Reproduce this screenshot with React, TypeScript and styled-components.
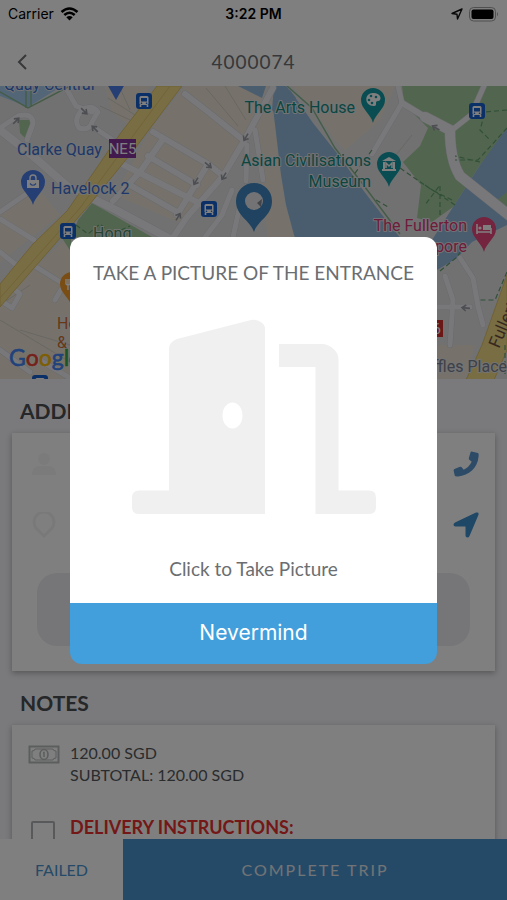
import React from "react";
import styled, { createGlobalStyle } from "styled-components";

const GlobalStyle = createGlobalStyle`
  *, *::before, *::after { box-sizing: border-box; }
  body { margin: 0; background: #f4f4f8; font-family: Lato, "Open Sans", sans-serif; color: #55595c; }
  button { font: inherit; color: inherit; border: 0; padding: 0; background: none; cursor: pointer; }
  h1, h2, p { margin: 0; font-weight: 400; }
`;

const Screen = styled.div`
  height: 100vh;
  display: flex;
  flex-direction: column;
  overflow: hidden;
`;

const StatusBar = styled.div`
  flex: none;
  height: 28px;
  padding: 0 8px;
  display: grid;
  grid-template-columns: 1fr auto 1fr;
  align-items: center;
  background: #fff;
  color: #000;
  font: 400 14px/20px Inter, sans-serif;
`;

const StatusGroup = styled.div<{ $end?: boolean }>`
  display: flex;
  align-items: center;
  gap: 6px;
  justify-content: ${(p) => (p.$end ? "flex-end" : "flex-start")};
`;

const Clock = styled.time`
  font-weight: 600;
`;

const Header = styled.header`
  flex: none;
  height: 58px;
  padding: 10px 12px 0;
  display: grid;
  grid-template-columns: 1fr auto 1fr;
  align-items: center;
  background: #fff;
`;

const BackButton = styled.button`
  width: 20px;
  height: 32px;
  display: grid;
  place-items: center;
`;

const OrderNumber = styled.h1`
  font-size: 19px;
  line-height: 24px;
  letter-spacing: 1px;
  color: #6d7073;
`;

const Content = styled.main`
  flex: 1;
  min-height: 0;
  overflow: auto;
  scrollbar-width: none;
`;

const MapView = styled.svg`
  display: block;
  width: 100%;
  height: 293px;
  font-family: Roboto, sans-serif;
`;

const SectionTitle = styled.h2`
  padding: 20px 20px 10px;
  font-size: 21px;
  line-height: 24px;
  font-weight: 700;
  color: #4a4e52;
`;

const Card = styled.section`
  margin: 0 12px;
  padding: 0 25px 25px;
  background: #fff;
  box-shadow: 0 2px 6px rgba(0, 0, 0, 0.3);
`;

const ContactRow = styled.div`
  height: 61px;
  margin: 0 -10px 0 -6px;
  display: flex;
  align-items: center;
  justify-content: space-between;
`;

const IconButton = styled.button`
  width: 28px;
  height: 28px;
  display: grid;
  place-items: center;
`;

const Placeholder = styled.div`
  height: 73px;
  margin-top: 18px;
  border-radius: 20px;
  background: #ededf1;
`;

const NoteList = styled.section`
  margin: 0 12px;
  padding: 17px 16px;
  background: #fff;
  box-shadow: 0 2px 6px rgba(0, 0, 0, 0.3);
  display: grid;
  row-gap: 30px;
`;

const Note = styled.div`
  display: grid;
  grid-template-columns: 32px 1fr;
  column-gap: 10px;
  font-size: 16px;
  line-height: 22px;
`;

const Warning = styled.strong`
  font-size: 18px;
  font-weight: 700;
  color: #e8302f;
`;

const Footer = styled.footer`
  flex: none;
  height: 61px;
  display: flex;
  background: #fff;
`;

const FailButton = styled.button`
  width: 123px;
  font-size: 16px;
  color: #4a94d0;
`;

const CompleteButton = styled.button`
  flex: 1;
  background: #4a94d0;
  color: #e4e8ec;
  font-size: 16px;
  letter-spacing: 2px;
`;

const Backdrop = styled.div`
  position: fixed;
  inset: 0;
  padding: 0 70px;
  display: flex;
  align-items: center;
  justify-content: center;
  background: rgba(0, 0, 0, 0.5);
`;

const Dialog = styled.div`
  width: 100%;
  max-width: 480px;
  text-align: center;
  color: #6b6e71;
`;

const DialogTitle = styled.h2`
  padding: 24px 0 34px;
  border-radius: 12px 12px 0 0;
  background: #fff;
  font-size: 19px;
  line-height: 24px;
  white-space: nowrap;
`;

const CaptureButton = styled.button`
  && { background: #fff; }
  width: 100%;
  padding-bottom: 22px;
  display: flex;
  flex-direction: column;
  align-items: center;
  gap: 42px;
  font-size: 19px;
  line-height: 24px;
`;

const DismissButton = styled.button`
  display: block;
  width: 100%;
  height: 61px;
  border-radius: 0 0 12px 12px;
  background: #429fdb;
  color: #fff;
  font: 400 21px/28px Inter, sans-serif;
`;

type Point = { x: number; y: number };

const BusStop = ({ x, y }: Point) => (
  <g transform={`translate(${x} ${y})`}>
    <rect x="-8" y="-8" width="16" height="16" rx="3" fill="#1660d0" />
    <rect x="-4.500" y="-5" width="9" height="9" rx="1.500" fill="#fff" />
    <rect x="-3" y="-3" width="6" height="3.500" fill="#1660d0" />
    <path d="M-3.500 4v2M3.500 4v2" stroke="#fff" strokeWidth="1.600" />
    <circle cx="-2.500" cy="2.300" r=".8" fill="#1660d0" />
    <circle cx="2.500" cy="2.300" r=".8" fill="#1660d0" />
  </g>
);

const Pin = ({ x, y, fill, children }: Point & { fill: string; children?: React.ReactNode }) => (
  <g transform={`translate(${x} ${y})`}>
    <path d="M0 23C-2 14-12 9-12 0a12 12 0 0 1 24 0C12 9 2 14 0 23Z" fill={fill} />
    {children}
  </g>
);

const Arrow = ({ x, y, turn }: Point & { turn: number }) => (
  <path
    transform={`translate(${x} ${y}) rotate(${turn})`}
    d="M-4 0H4M0-3 4 0 0 3"
    fill="none"
    stroke="#9a9ca4"
    strokeWidth="1.600"
  />
);

const CityMap = () => (
  <MapView viewBox="0 86 507 293" preserveAspectRatio="xMidYMid slice" role="img" aria-label="Map of the delivery area">
    <rect y="86" width="507" height="294" fill="#e3e3e5" />
    <g fill="#ece5d6">
      <path d="M185 86H268L245 135 225 170 185 225 115 195 150 130Z" />
      <path d="M255 115 272 100 281 160 284 200 296 240H268L262 190Z" />
      <path d="M292 86H395L380 120 345 150 335 140 312 108Z" />
      <path d="M0 300 70 235V380H0Z" />
      <path d="M0 215 38 188 60 215 0 262Z" />
      <path d="M437 345 475 345 465 380H437Z" />
      <path d="M105 86H150L128 125 112 112Z" />
    </g>
    <path d="M116 198 180 232 140 222Z" fill="#e3e3e5" />
    <path d="M0 86H62L28 107 0 96Z" fill="#a5cdf0" />
    <path d="M273 108 290 90 313 123 340 157 363 190 386 220 410 250H300L294 235 286 205 281 175Z" fill="#93bade" />
    <path d="M238 86H266L262 98 250 92ZM272 110 274 86H286L296 98 280 118Z" fill="#93bade" />
    <path d="M507 125 480 165 453 207 432 240V272L457 258 472 242 507 225Z" fill="#93bade" />
    <g fill="#a5cb9e">
      <path d="M402 86H507V128L480 165 453 207 432 222 417 218 421 185 403 162 420 146 428 128 404 104Z" />
      <path d="M92 203 152 237H72L78 220Z" />
      <path d="M62 238H71V252Z" />
      <path d="M19 120H31V130L26 139 20 133Z" />
      <path d="M497 200 507 192V214Z" />
    </g>
    <path d="M437 258 457 258 484 236 507 240V300L478 345H437Z" fill="#e3e3e5" />
    <path d="M437 243 470 238 457 258 437 270Z" fill="#93bade" />
    <g fill="none" stroke="#d2cec6" strokeWidth="1">
      <path d="M120 88 130 110M108 98 140 118M100 106 130 120" />
      <path d="M225 86 246 120M206 88 238 126M0 305 30 285M20 330 70 345M0 320 70 362M412 135 392 160" />
    </g>
    <g fill="none" strokeLinecap="round" strokeLinejoin="round">
      {[
        { color: "#d3d4da", extra: 1 },
        { color: "#f1f1f5", extra: 0 },
      ].map(({ color, extra }) => (
        <g key={color} stroke={color}>
          <path strokeWidth={8 + extra} d="M0 130 33 156 67 186 118 211 172 240" />
          <path strokeWidth={6 + extra} d="M273 88 245 139 223 176 187 217 170 242M185 94 207 111 242 139M153 132 208 164 223 176M148 156 197 185M122 164 205 206M130 185 177 212M163 139 140 172 113 201M208 164 177 215" />
          <path strokeWidth={5 + extra} d="M247 145 246 181M255 130 263 180M232 190 222 215 203 240M240 205 232 242M66 88 76 106 92 112M82 110Q73 120 79 128 90 131 92 122L98 112Q92 104 82 110M92 126 114 141M0 128 18 116Q33 112 33 124L27 140M0 212 32 190M0 219 34 240" />
          <path strokeWidth={5 + extra} d="M402 103 372 154M484 86 471 115 452 130M398 86 402 103M445 276 453 300 450 345M460 258 473 278 478 306 483 325M437 307H470M33 265 70 288M0 252 20 268M0 300 12 308 20 294 8 284M55 300 62 288M0 350 30 372M36 358 70 378" />
          <path strokeWidth={10 + extra} d="M425 117 450 130Q450 160 460 176L510 216" />
          <path strokeWidth={6 + extra} d="M402 103 430 120" />
        </g>
      ))}
    </g>
    <path d="M157 86H182L133 151 90 204 0 307V284L33 244 67 211 120 134Z" fill="#f3da86" stroke="#dfc26c" />
    <path d="M170 86 127 144 80 208 0 298" fill="none" stroke="#e2c872" />
    <path d="M507 275V350L494 380H466L482 345Z" fill="#f3da86" stroke="#dfc26c" />
    <path d="M287 86 312 108 335 148 362 183 400 234M0 92 28 108 70 86M26 108V86M31 107V86" fill="none" stroke="#8aba90" strokeWidth="1.500" />
    <g fill="none" stroke="#62a06f" strokeWidth="1.200" strokeDasharray="5 3">
      <path d="M507 110 485 112 480 130 490 140M507 128 478 160 455 160M452 200 432 190 400 168M455 205 425 185M440 215V185L425 205M480 162 455 156M372 150 350 180M76 225 88 234 100 224 112 234 130 226M376 200 390 208M440 271 457 257 465 245M507 272 495 300H478M505 345V375" />
    </g>
    <Arrow x={84} y={111} turn={45} />
    <Arrow x={16} y={121} turn={-45} />
    <Arrow x={95} y={129} turn={225} />
    <Arrow x={208} y={165} turn={40} />
    <Arrow x={196} y={181} turn={120} />
    <Arrow x={224} y={176} turn={120} />
    <Arrow x={246} y={137} turn={120} />
    <Arrow x={178} y={217} turn={-60} />
    <Arrow x={436} y={128} turn={210} />
    <Arrow x={466} y={308} turn={185} />
    <BusStop x={144} y={101} />
    <BusStop x={209} y={209} />
    <BusStop x={68} y={231} />
    <BusStop x={477} y={111} />
    <BusStop x={40} y={383} />
    <path d="M107 84H125L116 100Z" fill="#4a7fe8" />
    <Pin x={33} y={182} fill="#4a7fe8">
      <path d="M-6-2H6V6H-6Z" fill="#fff" />
      <path d="M-3-2V-4A3 3 0 0 1 3-4V-2" fill="none" stroke="#fff" strokeWidth="1.400" />
      <path d="M-3 1.500Q0 5 3 1.500" fill="none" stroke="#4a7fe8" strokeWidth="1.200" />
    </Pin>
    <Pin x={373} y={100} fill="#129ba4">
      <path d="M0-7C9-7 9 1 5 1 1 1 5 6 1 6-9 6-9-7 0-7Z" fill="#fff" />
      <g fill="#129ba4"><circle cx="-4" cy="0" r="1.300" /><circle cx="-2" cy="-4" r="1.300" /><circle cx="3" cy="-3" r="1.300" /><circle cx="-1" cy="3" r="1.300" /></g>
    </Pin>
    <Pin x={389} y={164} fill="#129ba4">
      <path d="M-7-3 0-7 7-3ZM-6-2H-4V5H-6ZM4-2H6V5H4ZM-7 5H7V7H-7Z" fill="#fff" />
      <path d="M-3 4V-1L0 2 3-1V4" fill="none" stroke="#fff" strokeWidth="1.500" />
    </Pin>
    <Pin x={484} y={229} fill="#e8487c">
      <path d="M-7-5V5M-7 3H7V5M7 3V-1" stroke="#fff" strokeWidth="1.600" fill="none" />
      <circle cx="-4" cy="-1" r="1.600" fill="#fff" />
      <rect x="-1" y="-4" width="8" height="5" fill="#fff" />
    </Pin>
    <Pin x={72} y={284} fill="#f29b26">
      <path d="M-6-5V0Q-4 2-2 0V-5M-4-5V6" stroke="#fff" strokeWidth="1.400" fill="none" />
    </Pin>
    <path d="M254 232C250 220 236 216 236 201a18 18 0 0 1 36 0C272 216 258 220 254 232Z" fill="#3e86c0" />
    <circle cx="254" cy="201" r="9" fill="#e6e6ea" />
    <path d="M257 203 262 199 261 207Z" fill="#85888f" />
    <g fontSize="16" strokeLinejoin="round" stroke="#e6e7ea" strokeWidth="2" paintOrder="stroke">
      <g fill="#3c6fd2">
        <text x="4" y="90">Quay Central</text>
        <text x="17" y="155">Clarke Quay</text>
        <text x="51" y="194">Havelock 2</text>
      </g>
      <g fill="#178c80">
        <text x="355" y="113" textAnchor="end">The Arts House</text>
        <text x="371" y="166" textAnchor="end">Asian Civilisations</text>
        <text x="371" y="187" textAnchor="end">Museum</text>
      </g>
      <g fill="#dd3974">
        <text x="467" y="231" textAnchor="end">The Fullerton</text>
        <text x="467" y="252" textAnchor="end">Singapore</text>
      </g>
      <text x="93" y="239" fill="#4f8a62">Hong</text>
      <g fill="#d0702a"><text x="57" y="329">Hong</text><text x="57" y="348">&amp; Bar</text></g>
      <text x="507" y="372" textAnchor="end" fill="#7c8290">Raffles Place</text>
    </g>
    <text transform="translate(499 349) rotate(-67)" fontSize="17" fill="#6c5140">Fullerton Rd</text>
    <rect x="109" y="139" width="27" height="19" fill="#86359c" />
    <text x="122.500" y="154" fontSize="15" textAnchor="middle" fill="#fff">NE5</text>
    <rect x="403" y="320" width="40" height="17" fill="#d42e2e" />
    <text x="441" y="334" fontSize="15" textAnchor="end" fill="#fff">NS26</text>
    <text x="9" y="366" fontFamily="Lato, sans-serif" fontWeight="400" fontSize="23" strokeLinejoin="round" strokeWidth=".6">
      <tspan fill="#4285f4" stroke="#4285f4">G</tspan><tspan fill="#ea4335" stroke="#ea4335">o</tspan><tspan fill="#fbbc05" stroke="#fbbc05">o</tspan><tspan fill="#4285f4" stroke="#4285f4">g</tspan><tspan fill="#34a853" stroke="#34a853">l</tspan><tspan fill="#ea4335" stroke="#ea4335">e</tspan>
    </text>
  </MapView>
);

const WifiIcon = () => (
  <svg width="19" height="14" viewBox="0 0 19 14" aria-hidden="true">
    <path d="M1.500 5Q9.500-2 17.500 5M4.300 8Q9.500 3.500 14.700 8" fill="none" stroke="#000" strokeWidth="2.600" />
    <path d="M9.500 13.500 6.300 10.200Q9.500 7.600 12.700 10.200Z" />
  </svg>
);

const LocationIcon = () => (
  <svg width="12" height="12" viewBox="0 0 12 12" aria-hidden="true">
    <path d="M11 1 1 5.500 6 6.200 6.500 11Z" fill="none" stroke="#111" strokeWidth="1.400" strokeLinejoin="round" />
  </svg>
);

const BatteryIcon = () => (
  <svg width="30" height="15" viewBox="0 0 30 15" aria-hidden="true">
    <rect x=".5" y=".5" width="26" height="13.500" rx="4" fill="none" stroke="#a0a0a0" />
    <rect x="2.500" y="2.500" width="22" height="9.500" rx="2" />
    <path d="M28 5Q30 7 28 9.500Z" fill="#a0a0a0" />
  </svg>
);

const PhoneIcon = () => (
  <svg width="26" height="26" viewBox="0 0 26 26" aria-hidden="true">
    <path d="M18.500.5 25 2Q26 2.500 25.500 6C24.500 17 16 24.500 5 25.500Q2 25.700 1.700 24.500L.6 19.500Q.5 18.500 1.500 18L7 15.700Q8 15.500 8.700 16.200L10.700 18.700Q16 16.200 18.700 10.700L16.300 8.700Q15.500 8 15.900 7L17.500 1.200Q17.800.4 18.500.5Z" fill="#5a96cf" />
  </svg>
);

const NavigateIcon = () => (
  <svg width="26" height="26" viewBox="0 0 26 26" aria-hidden="true">
    <path d="M23 .6Q26.500-.2 25.300 3.200L16.500 24Q15.800 25.500 14.500 25.500 12.500 25.500 12.500 23.500V14.500H2.500Q.5 14.500.5 12.800.5 11.500 2 10.500Z" fill="#3f8fcc" />
  </svg>
);

const PersonIcon = () => (
  <svg width="26" height="22" viewBox="0 0 26 22" fill="#f6f6f7" aria-hidden="true">
    <circle cx="13" cy="6" r="6" />
    <path d="M1 22Q1 13 9 13H17Q25 13 25 22Z" />
  </svg>
);

const PlaceIcon = () => (
  <svg width="26" height="26" viewBox="0 0 26 26" fill="none" aria-hidden="true">
    <path d="M13 24 5 16A10 10 0 1 1 21 16Z" stroke="#f3f3f5" strokeWidth="3" />
  </svg>
);

const CashIcon = () => (
  <svg width="32" height="22" viewBox="0 0 32 22" fill="none" stroke="#b8babc" aria-hidden="true">
    <rect x="1.500" y="4.500" width="29" height="16" strokeWidth="2" />
    <path d="M4 9Q7 9 7 7H25Q25 9 28 9V16Q25 16 25 18H7Q7 16 4 16Z" />
    <ellipse cx="16" cy="12.500" rx="4" ry="5" strokeWidth="1.600" />
    <path d="M15 10.500H16V15" strokeWidth="1.500" />
  </svg>
);

const BoxIcon = () => (
  <svg width="32" height="26" viewBox="0 0 32 26" fill="none" aria-hidden="true">
    <rect x="4" y="6" width="22" height="24" rx="1" stroke="#b0b2b4" strokeWidth="2" />
  </svg>
);

const DoorIcon = () => (
  <svg width="244" height="196" viewBox="0 0 244 196" aria-hidden="true">
    <path
      fillRule="evenodd"
      fill="#f0f0f0"
      d="M7 171.500H37V30Q37 23 45 20L119 1Q123 0 128 2.500 133 5 133 10V195H7Q0 195 0 188V179Q0 171.500 7 171.500ZM100.500 83.500C95 83.500 90.500 89 90.500 96.500S95 109.500 100.500 109.500 110.500 104 110.500 96.500 106 83.500 100.500 83.500Z"
    />
    <path fill="#f0f0f0" d="M147 25H190Q196 25 201 29.500 206.500 34 206.500 41V171.500H237Q244 171.500 244 178.500V188Q244 195 237 195H183.500V48H147Z" />
  </svg>
);

export default function App() {
  return (
    <>
      <GlobalStyle />
      <Screen>
        <StatusBar>
          <StatusGroup>
            <span>Carrier</span>
            <WifiIcon />
          </StatusGroup>
          <Clock>3:22 PM</Clock>
          <StatusGroup $end>
            <LocationIcon />
            <BatteryIcon />
          </StatusGroup>
        </StatusBar>
        <Header>
          <BackButton aria-label="Back">
            <svg width="10" height="16" viewBox="0 0 10 16" aria-hidden="true">
              <path d="M9 1 2 8 9 15" fill="none" stroke="#6d7073" strokeWidth="2" />
            </svg>
          </BackButton>
          <OrderNumber>4000074</OrderNumber>
        </Header>
        <Content>
          <CityMap />
          <SectionTitle>ADDRESS</SectionTitle>
          <Card>
            <ContactRow>
              <PersonIcon />
              <IconButton aria-label="Call"><PhoneIcon /></IconButton>
            </ContactRow>
            <ContactRow>
              <PlaceIcon />
              <IconButton aria-label="Navigate"><NavigateIcon /></IconButton>
            </ContactRow>
            <Placeholder />
          </Card>
          <SectionTitle>NOTES</SectionTitle>
          <NoteList>
            <Note>
              <CashIcon />
              <div>
                <p>120.00 SGD</p>
                <p>SUBTOTAL: 120.00 SGD</p>
              </div>
            </Note>
            <Note>
              <BoxIcon />
              <Warning>DELIVERY INSTRUCTIONS:</Warning>
            </Note>
          </NoteList>
        </Content>
        <Footer>
          <FailButton>FAILED</FailButton>
          <CompleteButton>COMPLETE TRIP</CompleteButton>
        </Footer>
      </Screen>
      <Backdrop>
        <Dialog role="dialog" aria-modal="true" aria-labelledby="capture-title">
          <DialogTitle id="capture-title">TAKE A PICTURE OF THE ENTRANCE</DialogTitle>
          <CaptureButton>
            <DoorIcon />
            <span>Click to Take Picture</span>
          </CaptureButton>
          <DismissButton>Nevermind</DismissButton>
        </Dialog>
      </Backdrop>
    </>
  );
}
